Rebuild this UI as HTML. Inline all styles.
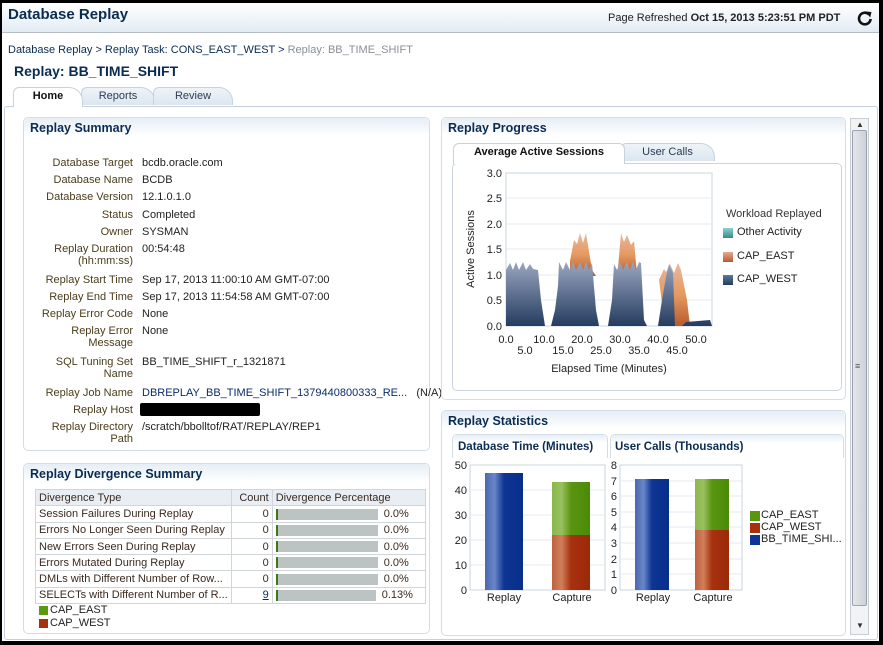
<!DOCTYPE html>
<html><head><meta charset="utf-8"><style>
*{margin:0;padding:0;box-sizing:border-box}
body{width:883px;height:645px;background:#000;font-family:"Liberation Sans",Tahoma,sans-serif;font-size:11px;color:#222;position:relative;overflow:hidden}
.a{position:absolute}
#page{left:2px;top:3px;width:877px;height:638px;background:#fff}
.hdr{left:2px;top:3px;width:877px;height:30px;background:linear-gradient(#fff,#e3ecf4);border-bottom:1px solid #b6bcc4}
.panel{border:1px solid #d4dde6;border-radius:5px;background:#fff}
.ph{position:absolute;left:0;top:0;right:0;height:18px;background:linear-gradient(#e6eef6,#fff);border-radius:5px 5px 0 0}
.pt{position:absolute;left:6px;top:3px;font-weight:bold;font-size:12.5px;color:#0b2c52}
.lab{position:absolute;text-align:right;width:110px;color:#4a3d1c;line-height:12px}
.val{position:absolute;color:#222}
table{border-collapse:collapse;font-size:11px}
td{border:1px solid #d0d5da;height:16.3px;padding:0 3px;color:#3a2a20;white-space:nowrap}
.bar{display:inline-block;width:102px;height:11px;background:#bcc3c3;border-left:2px solid #3a7a10;vertical-align:middle;margin-right:6px}
.tab{position:absolute;height:18px;border:1px solid #c6d2de;border-bottom:none;border-radius:6px 14px 0 0;background:linear-gradient(#eef3f8,#dde6ef);text-align:center;line-height:17px;color:#2a3c55}
</style></head><body>
<div class="a" id="page"></div>
<div class="a hdr"></div>
<div class="a" style="left:8px;top:6px;font-size:15px;font-weight:bold;color:#0b2c52">Database Replay</div>
<div class="a" style="left:608px;top:12px;font-size:11px;color:#222">Page Refreshed <b>Oct 15, 2013 5:23:51 PM PDT</b></div>
<svg class="a" style="left:857px;top:10px" width="16" height="16" viewBox="0 0 16 16"><path d="M12 4.5A5.8 5.8 0 1 0 13.6 9" fill="none" stroke="#111" stroke-width="2.6"/><path d="M8.5 1.5l6 0.5-1.3 5.5z" fill="#111"/></svg>
<div class="a" style="left:8px;top:44px;color:#0b2c52">Database Replay &gt; Replay Task: CONS_EAST_WEST &gt; <span style="color:#8a8f96">Replay: BB_TIME_SHIFT</span></div>
<div class="a" style="left:14px;top:63px;font-size:14px;font-weight:bold;color:#0b2c52">Replay: BB_TIME_SHIFT</div>
<div class="tab" style="left:13px;top:87px;width:70px;background:#fff;font-weight:bold;color:#111;z-index:2;height:20px">Home</div>
<div class="tab" style="left:81px;top:87px;width:74px">Reports</div>
<div class="tab" style="left:153px;top:87px;width:80px">Review</div>
<div class="a" style="left:4px;top:106px;width:874px;height:534px;border:1px solid #c6d0da;border-radius:3px"></div>
<!-- scrollbar -->
<div class="a" style="left:850px;top:118px;width:19px;height:517px;background:#f1f3f5;border:1px solid #c9ced4"></div>
<div class="a" style="left:852px;top:130px;width:15px;height:476px;background:linear-gradient(90deg,#e3e6ea,#cdd2d8);border:1px solid #9aa3ad;border-radius:2px"></div>
<div class="a" style="left:855px;top:361px;font-size:9px;color:#555">≡</div>
<div class="a" style="left:856px;top:120px;font-size:8px;color:#333">▲</div>
<div class="a" style="left:856px;top:621px;font-size:8px;color:#333">▼</div>

<!-- Replay Summary -->
<div class="a panel" style="left:23px;top:117px;width:407px;height:334px"><div class="ph"></div><div class="pt">Replay Summary</div></div>
<div class="lab" style="left:23px;top:157px">Database Target</div><div class="val" style="left:142px;top:157px">bcdb.oracle.com</div>
<div class="lab" style="left:23px;top:174px">Database Name</div><div class="val" style="left:142px;top:174px">BCDB</div>
<div class="lab" style="left:23px;top:191px">Database Version</div><div class="val" style="left:142px;top:191px">12.1.0.1.0</div>
<div class="lab" style="left:23px;top:209px">Status</div><div class="val" style="left:142px;top:209px">Completed</div>
<div class="lab" style="left:23px;top:226px">Owner</div><div class="val" style="left:142px;top:226px">SYSMAN</div>
<div class="lab" style="left:23px;top:243px">Replay Duration<br>(hh:mm:ss)</div><div class="val" style="left:142px;top:243px">00:54:48</div>
<div class="lab" style="left:23px;top:274px">Replay Start Time</div><div class="val" style="left:142px;top:274px">Sep 17, 2013 11:00:10 AM GMT-07:00</div>
<div class="lab" style="left:23px;top:291px">Replay End Time</div><div class="val" style="left:142px;top:291px">Sep 17, 2013 11:54:58 AM GMT-07:00</div>
<div class="lab" style="left:23px;top:308px">Replay Error Code</div><div class="val" style="left:142px;top:308px">None</div>
<div class="lab" style="left:23px;top:325px">Replay Error<br>Message</div><div class="val" style="left:142px;top:325px">None</div>
<div class="lab" style="left:23px;top:356px">SQL Tuning Set<br>Name</div><div class="val" style="left:142px;top:356px">BB_TIME_SHIFT_r_1321871</div>
<div class="lab" style="left:23px;top:387px">Replay Job Name</div><div class="val" style="left:142px;top:387px;color:#0b2c6a">DBREPLAY_BB_TIME_SHIFT_1379440800333_RE... <span style="color:#222">&nbsp;&nbsp;(N/A)</span></div>
<div class="lab" style="left:23px;top:404px">Replay Host</div><div class="a" style="left:140px;top:403px;width:120px;height:13px;background:#000;border-radius:2px"></div>
<div class="lab" style="left:23px;top:421px">Replay Directory<br>Path</div><div class="val" style="left:142px;top:421px">/scratch/bbolltof/RAT/REPLAY/REP1</div>

<!-- Divergence -->
<div class="a panel" style="left:23px;top:463px;width:407px;height:171px"><div class="ph"></div><div class="pt">Replay Divergence Summary</div></div>
<table class="a" style="left:35px;top:489px;width:391px">
<tr style="background:#e8eef4"><td style="width:193px">Divergence Type</td><td style="width:41px;text-align:right">Count</td><td>Divergence Percentage</td></tr>
<tr><td>Session Failures During Replay</td><td style="text-align:right">0</td><td><span class="bar"></span>0.0%</td></tr>
<tr><td>Errors No Longer Seen During Replay</td><td style="text-align:right">0</td><td><span class="bar"></span>0.0%</td></tr>
<tr><td>New Errors Seen During Replay</td><td style="text-align:right">0</td><td><span class="bar"></span>0.0%</td></tr>
<tr><td>Errors Mutated During Replay</td><td style="text-align:right">0</td><td><span class="bar"></span>0.0%</td></tr>
<tr><td>DMLs with Different Number of Row...</td><td style="text-align:right">0</td><td><span class="bar"></span>0.0%</td></tr>
<tr><td>SELECTs with Different Number of R...</td><td style="text-align:right"><u style="color:#0b2c6a">9</u></td><td><span class="bar" style="width:100px"></span>0.13%</td></tr>
</table>
<div class="a" style="left:39px;top:606px;width:9px;height:9px;background:#5a9a10"></div><div class="a" style="left:50px;top:604px">CAP_EAST</div>
<div class="a" style="left:39px;top:619px;width:9px;height:9px;background:#a83010"></div><div class="a" style="left:50px;top:617px">CAP_WEST</div>

<!-- Replay Progress -->
<div class="a panel" style="left:441px;top:117px;width:405px;height:283px"><div class="ph"></div><div class="pt">Replay Progress</div></div>
<div class="a" style="left:452px;top:163px;width:390px;height:228px;border:1px solid #c9d4de;border-radius:5px"></div>
<div class="tab" style="left:453px;top:143px;width:172px;background:#fff;font-weight:bold;color:#111;z-index:2;height:21px;border-radius:6px 6px 0 0">Average Active Sessions</div>
<div class="tab" style="left:620px;top:143px;width:95px">User Calls</div>
<svg class="a" style="left:452px;top:160px" width="290" height="220" font-family="Liberation Sans" font-size="11" fill="#222">
<defs><linearGradient id="w" x1="0" y1="0" x2="0" y2="1"><stop offset="0" stop-color="#9aa6c0"/><stop offset="1" stop-color="#253c60"/></linearGradient>
<linearGradient id="e" x1="0" y1="0" x2="0" y2="1"><stop offset="0" stop-color="#e8b8a0"/><stop offset="0.5" stop-color="#e59a60"/><stop offset="1" stop-color="#b85a30"/></linearGradient></defs>
<rect x="54" y="13" width="206" height="153" fill="#fff" stroke="#c9d4de"/>
<g stroke="#e4eaf0"><line x1="54" y1="38" x2="260" y2="38"/><line x1="54" y1="64" x2="260" y2="64"/><line x1="54" y1="89" x2="260" y2="89"/><line x1="54" y1="115" x2="260" y2="115"/><line x1="54" y1="140" x2="260" y2="140"/></g>
<path d="M118 101L122 80L125 84L128 73L131 83L134 73L140 110L144 116L118 116Z" fill="url(#e)"/>
<path d="M166 108L169 73L172 82L175 75L179 85L182 81L185 114L172 116L166 116Z" fill="url(#e)"/>
<path d="M207 120L212 109L214 112L218 104L222 113L226 103L229 110L235 140L238 166L213 166Z" fill="url(#e)"/>
<path d="M54 166L54 110L58 103L61 110L64 102L67 110L71 102L74 110L78 104L81 109L86 110L89 140L93 166ZM99 166L103 150L106 126L107 102L111 110L114 102L118 110L121 102L124 110L128 102L131 110L134 102L137 110L140 103L144 150L147 166ZM156 166L160 140L162 104L165 110L168 102L171 110L175 102L178 110L181 102L184 110L187 102L189 103L192 160L195 166ZM206 166L210 140L214 117L217 104L221 113L223 166ZM230 166L234 162L246 161L258 160L260 166Z" fill="url(#w)"/>
<g text-anchor="end"><text x="50" y="17">3.0</text><text x="50" y="42">2.5</text><text x="50" y="68">2.0</text><text x="50" y="93">1.5</text><text x="50" y="119">1.0</text><text x="50" y="144">0.5</text><text x="50" y="170">0.0</text></g>
<g text-anchor="middle"><text x="54" y="183">0.0</text><text x="92" y="183">10.0</text><text x="130" y="183">20.0</text><text x="168" y="183">30.0</text><text x="206" y="183">40.0</text><text x="244" y="183">50.0</text>
<text x="73" y="194">5.0</text><text x="111" y="194">15.0</text><text x="149" y="194">25.0</text><text x="187" y="194">35.0</text><text x="225" y="194">45.0</text>
<text x="157" y="212">Elapsed Time (Minutes)</text></g>
<text transform="translate(22,89) rotate(-90)" text-anchor="middle">Active Sessions</text>
</svg>
<div class="a" style="left:726px;top:208px;font-size:11px;color:#333;font-family:'Liberation Sans'">Workload Replayed</div>
<div class="a" style="left:723px;top:228px;width:10px;height:10px;background:linear-gradient(#8dd0cc,#3a8a8a)"></div><div class="a" style="left:737px;top:226px">Other Activity</div>
<div class="a" style="left:723px;top:252px;width:10px;height:10px;background:linear-gradient(#e8a890,#b85a30)"></div><div class="a" style="left:737px;top:250px">CAP_EAST</div>
<div class="a" style="left:723px;top:275px;width:10px;height:10px;background:linear-gradient(#5a7a9a,#253c60)"></div><div class="a" style="left:737px;top:273px">CAP_WEST</div>

<!-- Replay Statistics -->
<div class="a panel" style="left:441px;top:410px;width:405px;height:226px"><div class="ph"></div><div class="pt">Replay Statistics</div></div>
<div class="a" style="left:452px;top:434px;width:156px;height:24px;border:1px solid #d4dde6;border-bottom:none;border-radius:5px 5px 0 0"><div class="ph" style="height:8px"></div><div class="pt" style="left:5px;top:6px;font-size:11.5px">Database Time (Minutes)</div></div>
<div class="a" style="left:610px;top:434px;width:234px;height:24px;border:1px solid #d4dde6;border-bottom:none;border-radius:5px 5px 0 0"><div class="ph" style="height:8px"></div><div class="pt" style="left:4px;top:6px;font-size:11.5px">User Calls (Thousands)</div></div>
<svg class="a" style="left:452px;top:455px" width="300" height="155" font-family="Liberation Sans" font-size="11" fill="#222">
<defs>
<linearGradient id="b" x1="0" x2="1"><stop offset="0" stop-color="#4a68b0"/><stop offset="0.25" stop-color="#6a86c8"/><stop offset="0.5" stop-color="#0f3594"/><stop offset="1" stop-color="#082e8c"/></linearGradient>
<linearGradient id="g" x1="0" x2="1"><stop offset="0" stop-color="#8ab84a"/><stop offset="0.25" stop-color="#9ac060"/><stop offset="0.5" stop-color="#5a9510"/><stop offset="1" stop-color="#4a8a08"/></linearGradient>
<linearGradient id="r" x1="0" x2="1"><stop offset="0" stop-color="#c06040"/><stop offset="0.25" stop-color="#d0805a"/><stop offset="0.5" stop-color="#a83010"/><stop offset="1" stop-color="#9a2a08"/></linearGradient></defs>
<rect x="18" y="10" width="135" height="125" fill="#fff" stroke="#c9d4de"/>
<g stroke="#e4eaf0"><line x1="18" y1="35" x2="153" y2="35"/><line x1="18" y1="60" x2="153" y2="60"/><line x1="18" y1="85" x2="153" y2="85"/><line x1="18" y1="110" x2="153" y2="110"/></g>
<rect x="33" y="18" width="38" height="117" fill="url(#b)"/>
<rect x="100" y="27" width="38" height="53" fill="url(#g)"/><rect x="100" y="80" width="38" height="55" fill="url(#r)"/>
<g text-anchor="end"><text x="15" y="14">50</text><text x="15" y="39">40</text><text x="15" y="64">30</text><text x="15" y="89">20</text><text x="15" y="114">10</text><text x="15" y="139">0</text></g>
<text x="52" y="146" text-anchor="middle">Replay</text><text x="120" y="146" text-anchor="middle">Capture</text>
<rect x="168" y="10" width="122" height="125" fill="#fff" stroke="#c9d4de"/>
<g stroke="#e4eaf0"><line x1="168" y1="26" x2="290" y2="26"/><line x1="168" y1="41" x2="290" y2="41"/><line x1="168" y1="57" x2="290" y2="57"/><line x1="168" y1="72" x2="290" y2="72"/><line x1="168" y1="88" x2="290" y2="88"/><line x1="168" y1="104" x2="290" y2="104"/><line x1="168" y1="119" x2="290" y2="119"/></g>
<rect x="183" y="24" width="34" height="111" fill="url(#b)"/>
<rect x="243" y="24" width="34" height="51" fill="url(#g)"/><rect x="243" y="75" width="34" height="60" fill="url(#r)"/>
<g text-anchor="end"><text x="165" y="14">8</text><text x="165" y="30">7</text><text x="165" y="45">6</text><text x="165" y="61">5</text><text x="165" y="76">4</text><text x="165" y="92">3</text><text x="165" y="108">2</text><text x="165" y="123">1</text><text x="165" y="139">0</text></g>
<text x="201" y="146" text-anchor="middle">Replay</text><text x="261" y="146" text-anchor="middle">Capture</text>
</svg>
<div class="a" style="left:750px;top:511px;width:10px;height:10px;background:#5a9510"></div><div class="a" style="left:761px;top:509px">CAP_EAST</div>
<div class="a" style="left:750px;top:523px;width:10px;height:10px;background:#a83010"></div><div class="a" style="left:761px;top:521px">CAP_WEST</div>
<div class="a" style="left:750px;top:535px;width:10px;height:10px;background:#0f3594"></div><div class="a" style="left:761px;top:533px">BB_TIME_SHI...</div>
</body></html>
